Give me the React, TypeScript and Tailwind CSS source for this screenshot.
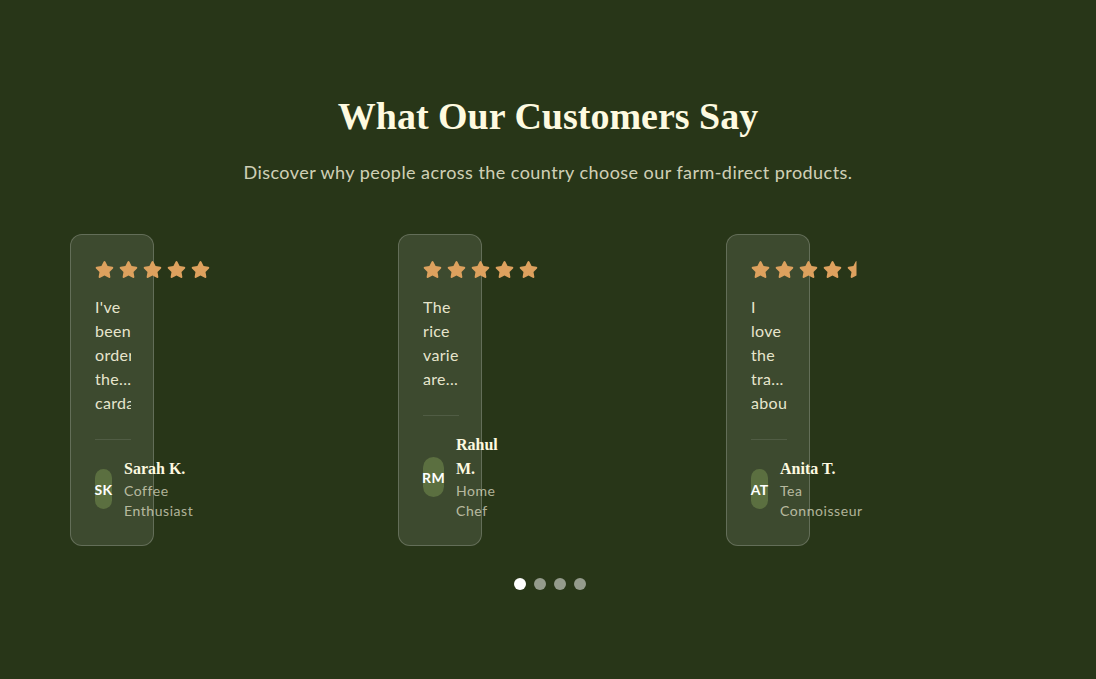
import { FaStar, FaStarHalf } from "react-icons/fa";

type Card = {
  lines: string[];
  half: boolean;
  initials: string;
  pill: string;
  name: string[];
  role: string[];
};

const cards: Card[] = [
  {
    lines: ["I've", "been", "ordering", "the...", "cardamom"],
    half: false,
    initials: "SK",
    pill: "w-[17px]",
    name: ["Sarah K."],
    role: ["Coffee", "Enthusiast"],
  },
  {
    lines: ["The", "rice", "varieties", "are..."],
    half: false,
    initials: "RM",
    pill: "w-[21px]",
    name: ["Rahul", "M."],
    role: ["Home", "Chef"],
  },
  {
    lines: ["I", "love", "the", "tra...", "about"],
    half: true,
    initials: "AT",
    pill: "w-[17px]",
    name: ["Anita T."],
    role: ["Tea", "Connoisseur"],
  },
];

function Stars({ half }: { half: boolean }) {
  return (
    <div className="flex h-5 items-center gap-[5px] whitespace-nowrap text-[#dda15e]">
      {[0, 1, 2, 3].map((i) => (
        <FaStar key={i} size={19} className="shrink-0" />
      ))}
      {half ? (
        <FaStarHalf size={19} className="shrink-0" />
      ) : (
        <FaStar size={19} className="shrink-0" />
      )}
    </div>
  );
}

function TestimonialCard({ c }: { c: Card }) {
  return (
    <div className="flex w-[84px] flex-col rounded-xl border border-white/20 bg-white/10 p-6">
      <Stars half={c.half} />
      <div className="mt-4 w-[36px] overflow-hidden text-[16px] leading-6 tracking-[0.02em] text-[#fefae0]/90">
        {c.lines.map((l, i) => (
          <div key={i} className="whitespace-nowrap">
            {l}
          </div>
        ))}
      </div>
      <div className="mt-6 w-[36px] border-t border-white/10 pt-[17px]">
        <div className="flex items-center gap-3">
          <div
            className={`flex h-10 ${c.pill} shrink-0 items-center justify-center rounded-full bg-[#5b6f40] text-[14px] font-bold tracking-[0.02em] text-white`}
          >
            <span className="whitespace-nowrap">{c.initials}</span>
          </div>
          <div className="shrink-0">
            {c.name.map((n, i) => (
              <div
                key={i}
                className="whitespace-nowrap font-['Liberation_Serif',serif] text-[16px] font-bold leading-6 text-[#fefae0]"
              >
                {n}
              </div>
            ))}
            {c.role.map((r, i) => (
              <div
                key={i}
                className="whitespace-nowrap text-[14px] leading-5 tracking-[0.04em] text-[#fefae0]/65"
              >
                {r}
              </div>
            ))}
          </div>
        </div>
      </div>
    </div>
  );
}

export default function App() {
  return (
    <div className="min-h-[679px] w-full bg-[#283618] pt-[92px] font-['Lato',sans-serif]">
      <h2 className="text-center font-['Liberation_Serif',serif] text-[38px] font-bold leading-[48px] text-[#fefae0]">
        What Our Customers Say
      </h2>
      <p className="mt-[18px] text-center text-[18px] leading-7 tracking-[0.025em] text-[#fefae0]/80">
        Discover why people across the country choose our farm-direct products.
      </p>
      <div className="mt-12 grid grid-cols-[328px_328px_328px] pl-[70px]">
        {cards.map((c, i) => (
          <div key={i}>
            <TestimonialCard c={c} />
          </div>
        ))}
      </div>
      <div className="mt-8 flex justify-center gap-2 pl-1">
        <span className="h-3 w-3 rounded-full bg-white" />
        <span className="h-3 w-3 rounded-full bg-white/50" />
        <span className="h-3 w-3 rounded-full bg-white/50" />
        <span className="h-3 w-3 rounded-full bg-white/50" />
      </div>
    </div>
  );
}
